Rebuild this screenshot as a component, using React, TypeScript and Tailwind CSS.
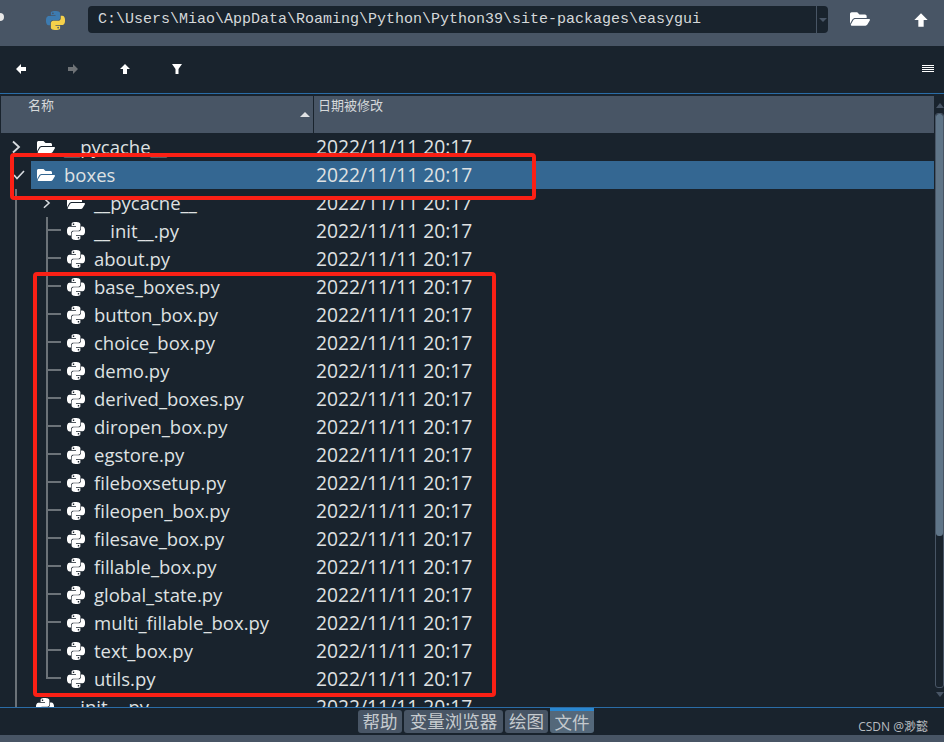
import { FaFolderOpen } from "react-icons/fa";

const PY_BLUE =
  "M14.25.18l.9.2.73.26.59.3.45.32.34.34.25.34.16.33.1.3.04.26.02.2-.01.13V8.5l-.05.63-.13.55-.21.46-.26.38-.3.31-.33.25-.35.19-.35.14-.33.1-.3.07-.26.04-.21.02H8.77l-.69.05-.59.14-.5.22-.41.27-.33.32-.27.35-.2.36-.15.37-.1.35-.07.32-.04.27-.02.21v3.06H3.17l-.21-.03-.28-.07-.32-.12-.35-.18-.36-.26-.36-.36-.35-.46-.32-.59-.28-.73-.21-.88-.14-1.05-.05-1.23.06-1.22.16-1.04.24-.87.32-.71.36-.57.4-.44.42-.33.42-.24.4-.16.36-.1.32-.05.24-.01h.16l.06.01h8.16v-.83H6.18l-.01-2.75-.02-.37.05-.34.11-.31.17-.28.25-.26.31-.23.38-.2.44-.18.51-.15.58-.12.64-.1.71-.06.77-.04.84-.02 1.27.05zm-6.3 1.98l-.23.33-.08.41.08.41.23.34.33.22.41.09.41-.09.33-.22.23-.34.08-.41-.08-.41-.23-.33-.33-.22-.41-.09-.41.09z";
const PY_YELLOW =
  "M21.04 6.11l.28.06.32.12.35.18.36.27.36.35.35.47.32.59.28.73.21.88.14 1.04.05 1.23-.06 1.23-.16 1.04-.24.86-.32.71-.36.57-.4.45-.42.33-.42.24-.4.16-.36.09-.32.05-.24.02-.16-.01h-8.22v.82h5.84l.01 2.76.02.36-.05.34-.11.31-.17.29-.25.25-.31.24-.38.2-.44.17-.51.15-.58.13-.64.09-.71.07-.77.04-.84.01-1.27-.04-1.07-.14-.9-.2-.73-.25-.59-.3-.45-.33-.34-.34-.25-.34-.16-.33-.1-.3-.04-.25-.02-.2.01-.13v-5.34l.05-.64.13-.54.21-.46.26-.38.3-.32.33-.24.35-.2.35-.14.33-.1.3-.06.26-.04.21-.02.13-.01h5.84l.69-.05.59-.14.5-.21.41-.28.33-.32.27-.35.2-.36.15-.36.1-.35.07-.32.04-.28.02-.21V6.07h2.09l.14.01zm-6.47 14.25l-.23.33-.08.41.08.41.23.33.33.23.41.08.41-.08.33-.23.23-.33.08-.41-.08-.41-.23-.33-.33-.23-.41-.08-.41.08z";

const FILES = [
  "__init__.py",
  "about.py",
  "base_boxes.py",
  "button_box.py",
  "choice_box.py",
  "demo.py",
  "derived_boxes.py",
  "diropen_box.py",
  "egstore.py",
  "fileboxsetup.py",
  "fileopen_box.py",
  "filesave_box.py",
  "fillable_box.py",
  "global_state.py",
  "multi_fillable_box.py",
  "text_box.py",
  "utils.py",
];

const DATE = "2022/11/11 20:17";

function PyIcon({ size = 18, blue = "#fff", yellow = "#fff" }: { size?: number; blue?: string; yellow?: string }) {
  return (
    <svg width={size} height={size} viewBox="0 0 24 24" className="shrink-0">
      <path d={PY_BLUE} fill={blue} />
      <path d={PY_YELLOW} fill={yellow} />
    </svg>
  );
}

function Arrow({ dir, color = "#fff", size = 12 }: { dir: "left" | "right" | "up"; color?: string; size?: number }) {
  const points = {
    left: "1,6 6,1 6,4 11,4 11,8 6,8 6,11",
    right: "11,6 6,1 6,4 1,4 1,8 6,8 6,11",
    up: "6,1 11,6 8,6 8,11 4,11 4,6 1,6",
  }[dir];
  return (
    <svg width={size} height={size} viewBox="0 0 12 12" className="shrink-0">
      <polygon points={points} fill={color} />
    </svg>
  );
}

function Chevron({ className }: { className: string }) {
  return (
    <svg viewBox="0 0 10 14" className={className} fill="none" stroke="#d8dce0" strokeWidth="1.8">
      <path d="M2 1.5 L8 7 L2 12.5" />
    </svg>
  );
}

// guide lines in front of the children of "boxes"
function Guides({ last }: { last: boolean }) {
  return (
    <>
      <span className="ml-[14px] h-full w-[31px] shrink-0 border-l-2 border-[#6b7278]" />
      <span className={`h-full w-[15px] shrink-0 ${last ? "" : "border-l-2 border-[#6b7278]"}`}>
        <span className={`block h-1/2 border-b-2 border-[#6b7278] ${last ? "border-l-2" : ""}`} />
      </span>
    </>
  );
}

function DateCell() {
  return <span className="text-[19.25px]">{DATE}</span>;
}

export default function App() {
  return (
    <div
      className="relative flex h-[742px] w-[944px] flex-col overflow-hidden bg-[#19232d] text-[#dfe1e2]"
      style={{ fontFamily: '"Open Sans", "Noto Sans CJK SC", sans-serif' }}
    >
      {/* path bar */}
      <div className="relative flex h-[46px] shrink-0 items-start bg-[#485565] pt-[6px]">
        <span className="absolute -left-[6px] top-[13px] h-[8px] w-[10px] rounded-full bg-[#e8e8e8]" />
        <span className="ml-[46px] mt-[5px]">
          <PyIcon size={19} blue="#3d7bb0" yellow="#f5d04a" />
        </span>
        <div className="ml-[23px] flex h-[27px] w-[740px] items-center rounded-[4px] bg-[#19232d]">
          <span
            className="flex-1 pl-[10px] text-[15px] leading-none text-[#d5d8da]"
            style={{ fontFamily: '"Liberation Mono", monospace' }}
          >
            C:\Users\Miao\AppData\Roaming\Python\Python39\site-packages\easygui
          </span>
          <span className="flex h-full w-[12px] items-center justify-center border-l border-[#485565]">
            <span className="h-0 w-0 border-x-[4px] border-t-[4px] border-x-transparent border-t-[#485565]" />
          </span>
        </div>
        <span className="ml-[22px] mt-[3px] text-white">
          <FaFolderOpen size={20} />
        </span>
        <span className="ml-[43px] mt-[6px]">
          <Arrow dir="up" size={16} />
        </span>
      </div>

      {/* toolbar */}
      <div className="flex h-[47px] shrink-0 items-center pb-[2px] pl-[15px] pr-[10px]">
        <span className="w-[52px]"><Arrow dir="left" /></span>
        <span className="w-[52px]"><Arrow dir="right" color="#6e7276" /></span>
        <span className="w-[52px]"><Arrow dir="up" /></span>
        <svg width="12" height="12" viewBox="0 0 12 12">
          <polygon points="1,1 11,1 7.5,6 7.5,11 4.5,11 4.5,6" fill="#fff" />
        </svg>
        <span className="ml-auto flex w-[12px] flex-col gap-[1px]">
          <span className="h-px bg-white" />
          <span className="h-px bg-white" />
          <span className="h-px bg-white" />
          <span className="h-px bg-white" />
        </span>
      </div>

      {/* file tree */}
      <div className="flex min-h-0 flex-1 border-t border-[#2a6ca6] pt-[2px]">
        <div className="flex w-[934px] flex-col pl-px">
          <div className="flex h-[37px] shrink-0 bg-[#485565] text-[13px] leading-[18px] text-[#d5d8da]">
            <div className="relative w-[313px] border-r border-[#19232d] pl-[27px]">
              名称
              <span className="absolute bottom-[16px] right-[3px] h-0 w-0 border-x-[5px] border-b-[5px] border-x-transparent border-b-[#e0e2e4]" />
            </div>
            <div className="pl-[4px]">日期被修改</div>
          </div>
          <div className="flex-1 overflow-hidden text-[18.5px] leading-[28px]">
            <div className="flex h-[28px] items-center">
              <span className="flex w-[36px] shrink-0 justify-end pr-[16px]">
                <Chevron className="h-[14px] w-[10px]" />
              </span>
              <span className="w-[27px] shrink-0 text-white"><FaFolderOpen size={18} /></span>
              <span className="w-[252px] shrink-0">__pycache__</span>
              <DateCell />
            </div>
            <div className="flex h-[28px] items-center">
              <span className="flex h-full w-[30px] shrink-0 items-center justify-center pl-[6px]">
                <svg width="12" height="10" viewBox="0 0 12 10" fill="none" stroke="#d8dce0" strokeWidth="1.6">
                  <path d="M1 5 L4 8.5 L11 1" />
                </svg>
              </span>
              <div className="flex h-full flex-1 items-center bg-[#346792]">
                <span className="ml-[6px] w-[27px] shrink-0 text-white"><FaFolderOpen size={18} /></span>
                <span className="w-[252px] shrink-0">boxes</span>
                <DateCell />
              </div>
            </div>
            <div className="flex h-[28px] items-center">
              <span className="ml-[14px] h-full w-[27px] shrink-0 border-l-2 border-[#6b7278]" />
              <Chevron className="mr-[16px] h-[12px] w-[9px] shrink-0" />
              <span className="w-[27px] shrink-0 text-white"><FaFolderOpen size={18} /></span>
              <span className="w-[222px] shrink-0">__pycache__</span>
              <DateCell />
            </div>
            {FILES.map((name, i) => (
              <div key={name} className="flex h-[28px] items-center">
                <Guides last={i === FILES.length - 1} />
                <span className="ml-[6px] w-[27px] shrink-0"><PyIcon /></span>
                <span className="w-[222px] shrink-0">{name}</span>
                <DateCell />
              </div>
            ))}
            <div className="flex h-[28px] items-center">
              <span className="ml-[14px] h-full w-[21px] shrink-0 border-l-2 border-[#6b7278]" />
              <span className="w-[28px] shrink-0"><PyIcon /></span>
              <span className="w-[252px] shrink-0">__init__.py</span>
              <DateCell />
            </div>
          </div>
        </div>
        {/* scrollbar */}
        <div className="flex w-[10px] flex-col items-center pt-[7px] pb-[10px] pl-[1px]">
          <span className="h-0 w-0 border-x-[4px] border-b-[5px] border-x-transparent border-b-[#485565]" />
          <div className="mt-[5px] w-[9px] flex-1 rounded-[3px] border border-[#485565]">
            <div className="h-[422px] rounded-[3px] bg-[#5f7588]" />
          </div>
          <span className="mt-[4px] h-0 w-0 border-x-[4px] border-t-[5px] border-x-transparent border-t-[#485565]" />
        </div>
      </div>

      {/* bottom tabs */}
      <div className="relative flex h-[28px] shrink-0 justify-center gap-[2px] border-t border-[#2a6ca6] pl-[8px] text-center text-[17.5px] leading-[22px] text-[#c5cace]">
        <span className="mt-[2px] h-[23px] w-[44px] rounded-[3px] bg-[#485565]">帮助</span>
        <span className="mt-[2px] h-[23px] w-[99px] rounded-[3px] bg-[#485565]">变量浏览器</span>
        <span className="mt-[2px] h-[23px] w-[43px] rounded-[3px] bg-[#485565]">绘图</span>
        <span className="h-[25px] w-[44px] rounded-b-[3px] border-t-[3px] border-[#2a87d0] bg-[#54687a]">文件</span>
        <span className="absolute right-[16px] top-[9px] text-[12px] leading-[20px] text-[#b8bcc0]">CSDN @渺懿</span>
      </div>
      <div className="h-[7px] shrink-0 bg-[#485565]" />

      {/* red annotations drawn on top of the screenshot */}
      <div className="absolute left-[10px] top-[153px] h-[47px] w-[526px] rounded-[4px] border-[4px] border-[#fb2015]" />
      <div className="absolute left-[33px] top-[272px] h-[425px] w-[463px] rounded-[4px] border-[4px] border-[#fb2015]" />
    </div>
  );
}
